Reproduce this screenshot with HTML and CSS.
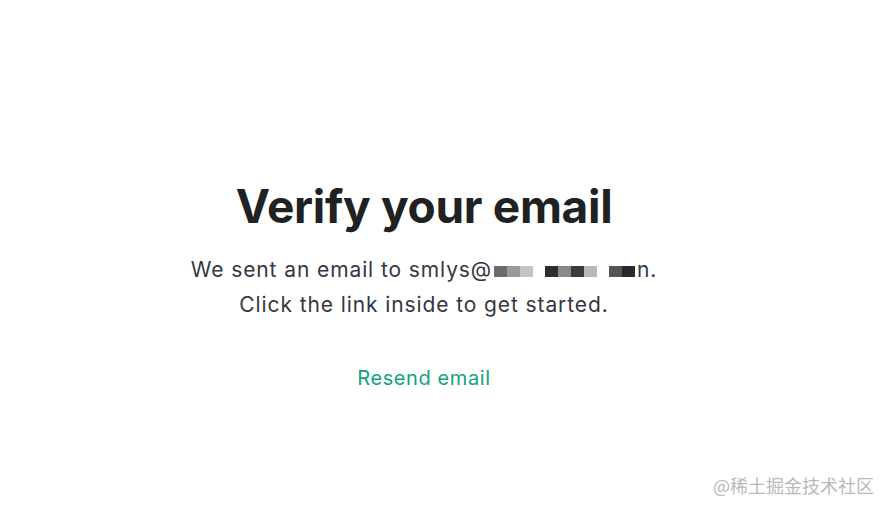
FILE: index.html
```html
<!DOCTYPE html>
<html>
<head>
<meta charset="utf-8">
<link rel="stylesheet" href="styles.css">
</head>
<body>
<main class="page">
  <section class="card">
    <h1 class="title">Verify your email</h1>
    <p class="text">We sent an email to <span class="email">smlys@<span class="mosaic"><i class="m m1"></i><i class="m m2"></i><i class="m m3"></i><i class="gap"></i><i class="m m4"></i><i class="m m5"></i><i class="m m6"></i><i class="m m7"></i><i class="gap"></i><i class="m m8"></i><i class="m m9"></i></span>n</span>.<br>Click the link inside to get started.</p>
    <a class="resend" href="#">Resend email</a>
  </section>
  <div class="watermark">@稀土掘金技术社区</div>
</main>
</body>
</html>
```

FILE: styles.css
```css
html, body {
  margin: 0;
  padding: 0;
  background: #ffffff;
}
.page {
  width: 890px;
  height: 514px;
  box-sizing: border-box;
  padding-right: 42px;
  position: relative;
  display: flex;
  justify-content: center;
  font-family: Inter, "Noto Sans", sans-serif;
}
.card {
  display: flex;
  flex-direction: column;
  align-items: center;
  padding-top: 176px;
}
.title {
  margin: 0;
  font-size: 46px;
  font-weight: 700;
  color: #202123;
  letter-spacing: -0.3px;
  line-height: 60px;
}
.text {
  margin: 16px 0 0;
  font-size: 21px;
  letter-spacing: 0.9px;
  line-height: 35px;
  color: #353740;
  text-align: center;
}
.email {
  color: #353740;
}
.mosaic {
  display: inline-flex;
  align-items: center;
  vertical-align: middle;
  margin: 0 2px;
}
.m {
  display: inline-block;
  width: 13px;
  height: 11px;
}
.gap { display: inline-block; width: 12px; }
.m1 { background: #6b6b6b; }
.m2 { background: #9a9a9a; }
.m3 { background: #c4c4c4; }
.m4 { background: #2e2e2e; }
.m5 { background: #8a8a8a; }
.m6 { background: #3c3c3c; }
.m7 { background: #b8b8b8; }
.m8 { background: #555555; }
.m9 { background: #2a2a2a; }
.resend {
  margin-top: 44px;
  font-size: 20px;
  letter-spacing: 0.6px;
  color: #10a37f;
  text-decoration: none;
}
.watermark {
  position: absolute;
  right: 16px;
  bottom: 16px;
  font-family: "Noto Sans CJK SC", sans-serif;
  font-size: 18px;
  color: #b9b9b9;
}
```
